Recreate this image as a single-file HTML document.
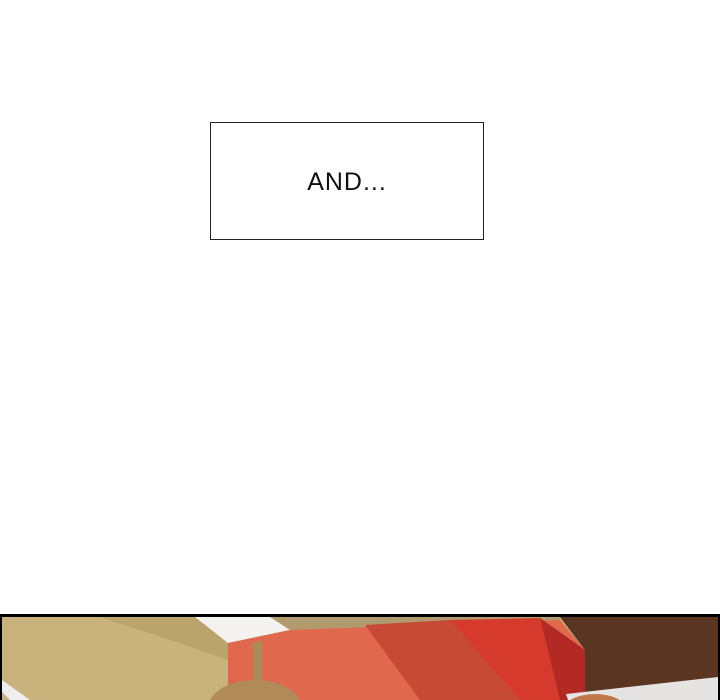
<!DOCTYPE html>
<html><head><style>
html,body{margin:0;padding:0;background:#fff;width:720px;height:700px;overflow:hidden;position:relative}
.box{position:absolute;left:210px;top:122px;width:272px;height:116px;border:1.5px solid #222;background:#fff}
.t{position:absolute;left:0;width:272px;top:44px;text-align:center;font-family:"Liberation Sans",sans-serif;font-size:25px;line-height:30px;color:#111;letter-spacing:1px}
svg{position:absolute;left:0;top:614px;overflow:hidden}
</style></head><body>
<div class="box"><div class="t">AND...</div></div>
<svg width="720" height="86" viewBox="0 614 720 86">
<rect x="0" y="614" width="720" height="86" fill="#000"/>
<rect x="2" y="617" width="716" height="83" fill="#c8b078"/>
<polygon points="2,617 228,617 228,700 2,700" fill="#c9b27c"/>
<polygon points="100,617 228,617 228,660 170,640" fill="#bba46c"/>
<polygon points="195,617 290,617 290,630 228,643" fill="#f4f2ee"/>
<polygon points="270,617 560,617 560,623 290,630" fill="#b09a6e"/>
<polygon points="228,643 290,630 560,620 585,650 585,700 228,700" fill="#e0684c"/>
<polygon points="253,643 262,641 262,700 253,700" fill="#a98a58"/>
<polygon points="365,625 450,620 520,700 420,700" fill="#c64a36"/>
<polygon points="450,620 540,618 560,700 520,700" fill="#d53a2c"/>
<polygon points="540,618 585,650 585,700 560,700" fill="#b32a24"/>
<polygon points="560,617 718,617 718,700 585,700 585,650" fill="#5a3522"/>
<polygon points="566,694 718,677 718,700 570,706" fill="#e6e4e2"/>
<polygon points="2,680 30,700 10,700 2,692" fill="#eeeeee"/>
<ellipse cx="255" cy="710" rx="48" ry="30" fill="#b08a58"/>
<ellipse cx="595" cy="708" rx="30" ry="14" fill="#c07848"/>
</svg>
</body></html>
